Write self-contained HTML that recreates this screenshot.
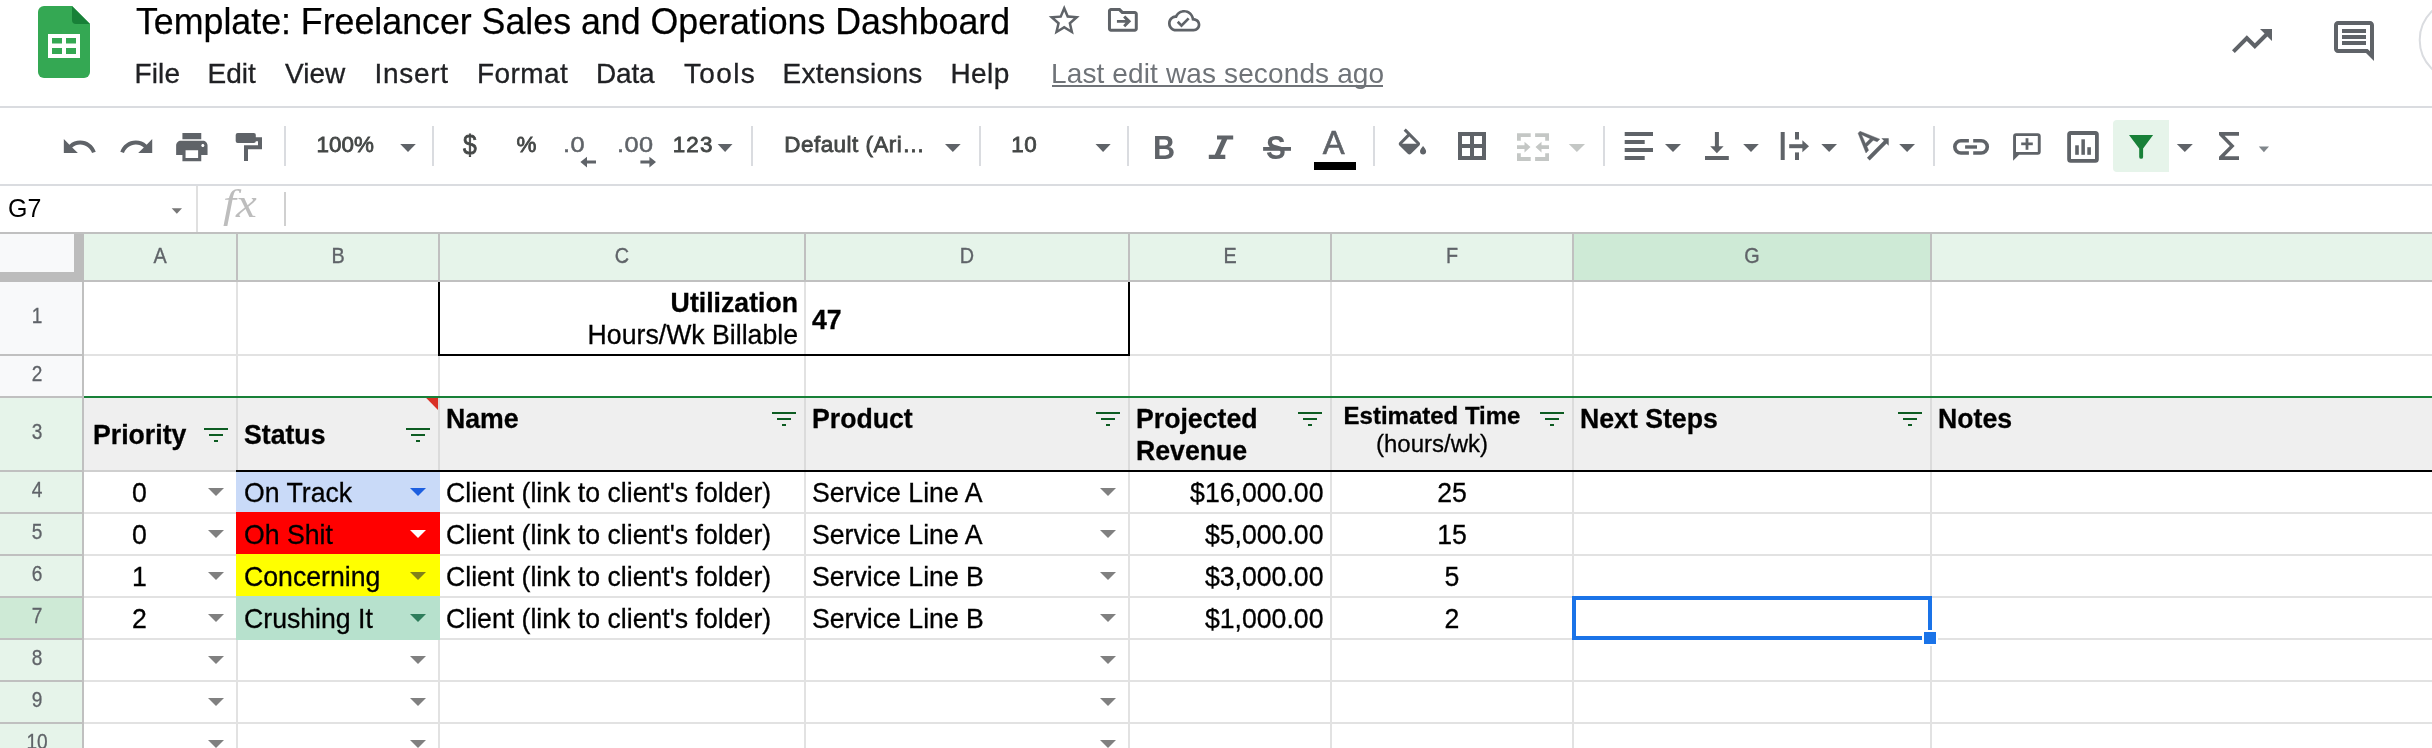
<!DOCTYPE html>
<html lang="en"><head><meta charset="utf-8">
<title>Template: Freelancer Sales and Operations Dashboard</title>
<style>
html,body{margin:0;padding:0;background:#fff;}
body{width:2432px;height:748px;overflow:hidden;position:relative;font-family:"Liberation Sans",sans-serif;color:#000;}
.a{position:absolute;white-space:pre;}
.r{position:absolute;}
.menu{font-size:28px;line-height:34px;color:#202124;-webkit-text-stroke:0.3px #202124;}
.tb{font-size:22.4px;line-height:30px;color:#444746;-webkit-text-stroke:0.8px #444746;}
.tbl{font-size:22.4px;line-height:30px;color:#5f6368;-webkit-text-stroke:0.5px #5f6368;transform:scaleX(1.13);transform-origin:left top;letter-spacing:0.4px;}
.ch{font-size:22.5px;line-height:24px;color:#5f6368;text-align:center;top:244.20px;transform:scaleX(0.88);-webkit-text-stroke:0.35px #5f6368;}
.rh{font-size:21.7px;line-height:24px;color:#5f6368;text-align:center;left:0;width:74px;transform:scaleX(0.88);-webkit-text-stroke:0.3px #5f6368;}
.c{font-size:26.67px;line-height:32px;color:#000;-webkit-text-stroke:0.3px #000;}
.b{font-weight:bold;}
.sep{position:absolute;top:126px;height:40px;width:2px;background:#dadce0;}
</style></head><body>
<div id="w" style="position:absolute;left:0;top:0;width:2432px;height:748px;will-change:transform">

<div class="r" style="left:0;top:106px;width:2432px;height:2px;background:#dadce0"></div>
<div class="a" style="left:135.8px;top:-2.33px;font-size:37.6px;line-height:46px;color:#000;transform:scaleX(0.951);transform-origin:left top;-webkit-text-stroke:0.25px #000">Template: Freelancer Sales and Operations Dashboard</div>
<div class="a menu" style="left:134.4px;top:57.40px;letter-spacing:0.2px">File</div>
<div class="a menu" style="left:207.5px;top:57.40px;letter-spacing:0px">Edit</div>
<div class="a menu" style="left:285px;top:57.40px;letter-spacing:0px">View</div>
<div class="a menu" style="left:374.5px;top:57.40px;letter-spacing:0.7px">Insert</div>
<div class="a menu" style="left:477px;top:57.40px;letter-spacing:0.42px">Format</div>
<div class="a menu" style="left:596px;top:57.40px;letter-spacing:-0.2px">Data</div>
<div class="a menu" style="left:684px;top:57.40px;letter-spacing:1.35px">Tools</div>
<div class="a menu" style="left:782.6px;top:57.40px;letter-spacing:0.3px">Extensions</div>
<div class="a menu" style="left:950.5px;top:57.40px;letter-spacing:0.4px">Help</div>
<div class="a" style="left:1051px;top:57.40px;font-size:28px;line-height:34px;color:#6f7378;letter-spacing:0.13px">Last edit was seconds ago</div>
<div class="r" style="left:1052px;top:84.5px;width:331px;height:2px;background:#6f7378"></div>
<div class="r" style="left:0;top:184px;width:2432px;height:2px;background:#dadce0"></div>
<div class="sep" style="left:284px"></div>
<div class="sep" style="left:432px"></div>
<div class="sep" style="left:751px"></div>
<div class="sep" style="left:979px"></div>
<div class="sep" style="left:1127px"></div>
<div class="sep" style="left:1373px"></div>
<div class="sep" style="left:1603px"></div>
<div class="sep" style="left:1933px"></div>
<div class="r" style="left:2113px;top:120px;width:56px;height:52px;border-radius:4px 0 0 4px;background:#e6f4ea"></div>
<div class="a tb" style="left:316.6px;top:130.44px">100%</div>
<div class="a tb" style="left:463.4px;top:129.50px;font-size:28px;transform:scaleX(0.88);transform-origin:left top">$</div>
<div class="a tb" style="left:516.6px;top:130.44px">%</div>
<div class="a tbl" style="left:563.3px;top:130.44px">.0</div>
<div class="a tbl" style="left:616.8px;top:130.44px">.00</div>
<div class="a tb" style="left:672.8px;top:130.44px;letter-spacing:1.1px">123</div>
<div class="a tb" style="left:784.3px;top:130.44px;letter-spacing:0.5px">Default (Ari…</div>
<div class="a tb" style="left:1011.3px;top:130.44px;letter-spacing:0.6px">10</div>
<div class="a" style="left:1153px;top:129.64px;font-size:32.5px;line-height:36px;font-weight:bold;color:#5f6368;transform:scaleX(0.94);transform-origin:left top">B</div>
<div class="a" style="left:1265.5px;top:130.17px;font-size:33px;line-height:36px;font-weight:bold;color:#5f6368;transform:scaleX(0.9);transform-origin:left top">S</div>
<div class="a" style="left:1322.8px;top:124.53px;font-size:32.8px;line-height:36px;color:#5f6368;-webkit-text-stroke:0.6px #5f6368">A</div>
<div class="r" style="left:1314px;top:162px;width:42px;height:8px;background:#000"></div>
<div class="a" style="left:7.6px;top:193.29px;font-size:26px;line-height:30px;color:#000;transform:scaleX(0.96);transform-origin:left top">G7</div>
<div class="r" style="left:196px;top:186px;width:2px;height:46px;background:#e0e0e0"></div>
<div class="r" style="left:284px;top:192px;width:2px;height:34px;background:#d0d0d0"></div>
<div class="a" style="left:222.5px;top:182.10px;font-family:'Liberation Serif',serif;font-style:italic;font-size:40px;line-height:44px;color:#bdbdbd;transform:scaleX(1.17);transform-origin:left top">fx</div><div class="r" style="left:0;top:232px;width:2432px;height:2px;background:#c0c0c0"></div>
<div class="r" style="left:84px;top:234px;width:2348px;height:46px;background:#e6f4ea"></div>
<div class="r" style="left:1574px;top:234px;width:356px;height:46px;background:#ceead6"></div>
<div class="r" style="left:0;top:280px;width:2432px;height:2px;background:#c0c0c0"></div>
<div class="r" style="left:0;top:234px;width:74px;height:38px;background:#f8f9fa"></div>
<div class="r" style="left:74px;top:234px;width:10px;height:48px;background:#bcbcbc"></div>
<div class="r" style="left:0;top:272px;width:84px;height:10px;background:#bcbcbc"></div>
<div class="r" style="left:0;top:282px;width:82px;height:72px;background:#f8f9fa"></div>
<div class="r" style="left:0;top:354px;width:82px;height:2px;background:#c0c0c0"></div>
<div class="a rh" style="top:304.38px">1</div>
<div class="r" style="left:0;top:356px;width:82px;height:40px;background:#f8f9fa"></div>
<div class="r" style="left:0;top:396px;width:82px;height:2px;background:#c0c0c0"></div>
<div class="a rh" style="top:362.38px">2</div>
<div class="r" style="left:0;top:398px;width:82px;height:72px;background:#e6f4ea"></div>
<div class="r" style="left:0;top:470px;width:82px;height:2px;background:#c0c0c0"></div>
<div class="a rh" style="top:420.38px">3</div>
<div class="r" style="left:0;top:472px;width:82px;height:40px;background:#e6f4ea"></div>
<div class="r" style="left:0;top:512px;width:82px;height:2px;background:#c0c0c0"></div>
<div class="a rh" style="top:478.38px">4</div>
<div class="r" style="left:0;top:514px;width:82px;height:40px;background:#e6f4ea"></div>
<div class="r" style="left:0;top:554px;width:82px;height:2px;background:#c0c0c0"></div>
<div class="a rh" style="top:520.38px">5</div>
<div class="r" style="left:0;top:556px;width:82px;height:40px;background:#e6f4ea"></div>
<div class="r" style="left:0;top:596px;width:82px;height:2px;background:#c0c0c0"></div>
<div class="a rh" style="top:562.38px">6</div>
<div class="r" style="left:0;top:598px;width:82px;height:40px;background:#ceead6"></div>
<div class="r" style="left:0;top:638px;width:82px;height:2px;background:#c0c0c0"></div>
<div class="a rh" style="top:604.38px">7</div>
<div class="r" style="left:0;top:640px;width:82px;height:40px;background:#e6f4ea"></div>
<div class="r" style="left:0;top:680px;width:82px;height:2px;background:#c0c0c0"></div>
<div class="a rh" style="top:646.38px">8</div>
<div class="r" style="left:0;top:682px;width:82px;height:40px;background:#e6f4ea"></div>
<div class="r" style="left:0;top:722px;width:82px;height:2px;background:#c0c0c0"></div>
<div class="a rh" style="top:688.38px">9</div>
<div class="r" style="left:0;top:724px;width:82px;height:40px;background:#e6f4ea"></div>
<div class="r" style="left:0;top:764px;width:82px;height:2px;background:#c0c0c0"></div>
<div class="a rh" style="top:730.38px">10</div>
<div class="r" style="left:82px;top:282px;width:2px;height:466px;background:#c0c0c0"></div>
<div class="r" style="left:84px;top:398px;width:2348px;height:72px;background:#efefef"></div>
<div class="r" style="left:84px;top:354px;width:2348px;height:2px;background:#e2e2e2"></div>
<div class="r" style="left:84px;top:512px;width:2348px;height:2px;background:#e2e2e2"></div>
<div class="r" style="left:84px;top:554px;width:2348px;height:2px;background:#e2e2e2"></div>
<div class="r" style="left:84px;top:596px;width:2348px;height:2px;background:#e2e2e2"></div>
<div class="r" style="left:84px;top:638px;width:2348px;height:2px;background:#e2e2e2"></div>
<div class="r" style="left:84px;top:680px;width:2348px;height:2px;background:#e2e2e2"></div>
<div class="r" style="left:84px;top:722px;width:2348px;height:2px;background:#e2e2e2"></div>
<div class="r" style="left:84px;top:764px;width:2348px;height:2px;background:#e2e2e2"></div>
<div class="r" style="left:236px;top:282px;width:2px;height:466px;background:#e2e2e2"></div>
<div class="r" style="left:236px;top:398px;width:2px;height:72px;background:#dbdbdb"></div>
<div class="r" style="left:236px;top:234px;width:2px;height:46px;background:#c0c0c0"></div>
<div class="r" style="left:438px;top:282px;width:2px;height:466px;background:#e2e2e2"></div>
<div class="r" style="left:438px;top:398px;width:2px;height:72px;background:#dbdbdb"></div>
<div class="r" style="left:438px;top:234px;width:2px;height:46px;background:#c0c0c0"></div>
<div class="r" style="left:804px;top:282px;width:2px;height:466px;background:#e2e2e2"></div>
<div class="r" style="left:804px;top:398px;width:2px;height:72px;background:#dbdbdb"></div>
<div class="r" style="left:804px;top:234px;width:2px;height:46px;background:#c0c0c0"></div>
<div class="r" style="left:1128px;top:282px;width:2px;height:466px;background:#e2e2e2"></div>
<div class="r" style="left:1128px;top:398px;width:2px;height:72px;background:#dbdbdb"></div>
<div class="r" style="left:1128px;top:234px;width:2px;height:46px;background:#c0c0c0"></div>
<div class="r" style="left:1330px;top:282px;width:2px;height:466px;background:#e2e2e2"></div>
<div class="r" style="left:1330px;top:398px;width:2px;height:72px;background:#dbdbdb"></div>
<div class="r" style="left:1330px;top:234px;width:2px;height:46px;background:#c0c0c0"></div>
<div class="r" style="left:1572px;top:282px;width:2px;height:466px;background:#e2e2e2"></div>
<div class="r" style="left:1572px;top:398px;width:2px;height:72px;background:#dbdbdb"></div>
<div class="r" style="left:1572px;top:234px;width:2px;height:46px;background:#c0c0c0"></div>
<div class="r" style="left:1930px;top:282px;width:2px;height:466px;background:#e2e2e2"></div>
<div class="r" style="left:1930px;top:398px;width:2px;height:72px;background:#dbdbdb"></div>
<div class="r" style="left:1930px;top:234px;width:2px;height:46px;background:#c0c0c0"></div>
<div class="a ch" style="left:84px;width:152px">A</div>
<div class="a ch" style="left:238px;width:200px">B</div>
<div class="a ch" style="left:440px;width:364px">C</div>
<div class="a ch" style="left:806px;width:322px">D</div>
<div class="a ch" style="left:1130px;width:200px">E</div>
<div class="a ch" style="left:1332px;width:240px">F</div>
<div class="a ch" style="left:1574px;width:356px">G</div>
<div class="r" style="left:84px;top:396px;width:2348px;height:2px;background:#188038"></div>
<div class="r" style="left:84px;top:470px;width:152px;height:2px;background:#cfcfcf"></div>
<div class="r" style="left:236px;top:470px;width:2196px;height:2px;background:#000"></div>
<div class="r" style="left:438px;top:282px;width:2px;height:74px;background:#000"></div>
<div class="r" style="left:1128px;top:282px;width:2px;height:74px;background:#000"></div>
<div class="r" style="left:438px;top:354px;width:692px;height:2px;background:#000"></div>
<div class="r" style="left:236px;top:472px;width:204px;height:40px;background:#c9daf8"></div>
<div class="r" style="left:236px;top:512px;width:204px;height:42px;background:#ff0000"></div>
<div class="r" style="left:236px;top:554px;width:204px;height:42px;background:#ffff00"></div>
<div class="r" style="left:236px;top:596px;width:204px;height:44px;background:#b7e1cd"></div>
<div class="a c b" style="left:440px;top:287.03px;width:358px;text-align:right;font-size:27.34px;line-height:32px;transform:scaleX(0.9756);transform-origin:right top;">Utilization</div>
<div class="a c" style="left:440px;top:318.73px;width:358px;text-align:right;font-size:27.34px;line-height:32px;transform:scaleX(0.9756);transform-origin:right top;">Hours/Wk Billable</div>
<div class="a c b" style="left:812.2px;top:303.53px;font-size:27.34px;line-height:32px;transform:scaleX(0.9756);transform-origin:left top;">47</div>
<div class="a c b" style="left:92.6px;top:418.63px;font-size:27.34px;line-height:32px;transform:scaleX(0.9756);transform-origin:left top;">Priority</div>
<div class="a c b" style="left:243.6px;top:418.63px;font-size:27.34px;line-height:32px;transform:scaleX(0.9756);transform-origin:left top;">Status</div>
<div class="a c b" style="left:446.4px;top:402.63px;font-size:27.34px;line-height:32px;transform:scaleX(0.9756);transform-origin:left top;">Name</div>
<div class="a c b" style="left:811.5px;top:402.63px;font-size:27.34px;line-height:32px;transform:scaleX(0.9756);transform-origin:left top;">Product</div>
<div class="a c b" style="left:1135.6px;top:402.63px;font-size:27.34px;line-height:32px;transform:scaleX(0.9756);transform-origin:left top;">Projected</div>
<div class="a c b" style="left:1135.6px;top:434.63px;font-size:27.34px;line-height:32px;transform:scaleX(0.9756);transform-origin:left top;">Revenue</div>
<div class="a c b" style="left:1332px;top:401.98px;width:200px;text-align:center;font-size:24.6px;line-height:28px;transform:scaleX(0.9756);transform-origin:center top;">Estimated Time</div>
<div class="a c" style="left:1332px;top:429.88px;width:200px;text-align:center;font-size:24.6px;line-height:28px;transform:scaleX(0.9756);transform-origin:center top;">(hours/wk)</div>
<div class="a c b" style="left:1579.6px;top:402.63px;font-size:27.34px;line-height:32px;transform:scaleX(0.9756);transform-origin:left top;">Next Steps</div>
<div class="a c b" style="left:1937.6px;top:402.63px;font-size:27.34px;line-height:32px;transform:scaleX(0.9756);transform-origin:left top;">Notes</div>
<div class="a c" style="left:84px;top:476.53px;width:111px;text-align:center;font-size:27.34px;line-height:32px;transform:scaleX(0.9756);transform-origin:center top;">0</div>
<div class="a c" style="left:243.6px;top:476.53px;font-size:27.34px;line-height:32px;transform:scaleX(0.9756);transform-origin:left top;">On Track</div>
<div class="a c" style="left:445.6px;top:476.53px;font-size:27.34px;line-height:32px;transform:scaleX(0.9756);transform-origin:left top;">Client (link to client's folder)</div>
<div class="a c" style="left:811.5px;top:476.53px;font-size:27.34px;line-height:32px;transform:scaleX(0.9756);transform-origin:left top;">Service Line A</div>
<div class="a c" style="left:1130px;top:476.53px;width:193.5px;text-align:right;font-size:27.34px;line-height:32px;transform:scaleX(0.9756);transform-origin:right top;">$16,000.00</div>
<div class="a c" style="left:1332px;top:476.53px;width:240px;text-align:center;font-size:27.34px;line-height:32px;transform:scaleX(0.9756);transform-origin:center top;">25</div>
<div class="a c" style="left:84px;top:518.53px;width:111px;text-align:center;font-size:27.34px;line-height:32px;transform:scaleX(0.9756);transform-origin:center top;">0</div>
<div class="a c" style="left:243.6px;top:518.53px;font-size:27.34px;line-height:32px;transform:scaleX(0.9756);transform-origin:left top;">Oh Shit</div>
<div class="a c" style="left:445.6px;top:518.53px;font-size:27.34px;line-height:32px;transform:scaleX(0.9756);transform-origin:left top;">Client (link to client's folder)</div>
<div class="a c" style="left:811.5px;top:518.53px;font-size:27.34px;line-height:32px;transform:scaleX(0.9756);transform-origin:left top;">Service Line A</div>
<div class="a c" style="left:1130px;top:518.53px;width:193.5px;text-align:right;font-size:27.34px;line-height:32px;transform:scaleX(0.9756);transform-origin:right top;">$5,000.00</div>
<div class="a c" style="left:1332px;top:518.53px;width:240px;text-align:center;font-size:27.34px;line-height:32px;transform:scaleX(0.9756);transform-origin:center top;">15</div>
<div class="a c" style="left:84px;top:560.53px;width:111px;text-align:center;font-size:27.34px;line-height:32px;transform:scaleX(0.9756);transform-origin:center top;">1</div>
<div class="a c" style="left:243.6px;top:560.53px;font-size:27.34px;line-height:32px;transform:scaleX(0.9756);transform-origin:left top;">Concerning</div>
<div class="a c" style="left:445.6px;top:560.53px;font-size:27.34px;line-height:32px;transform:scaleX(0.9756);transform-origin:left top;">Client (link to client's folder)</div>
<div class="a c" style="left:811.5px;top:560.53px;font-size:27.34px;line-height:32px;transform:scaleX(0.9756);transform-origin:left top;">Service Line B</div>
<div class="a c" style="left:1130px;top:560.53px;width:193.5px;text-align:right;font-size:27.34px;line-height:32px;transform:scaleX(0.9756);transform-origin:right top;">$3,000.00</div>
<div class="a c" style="left:1332px;top:560.53px;width:240px;text-align:center;font-size:27.34px;line-height:32px;transform:scaleX(0.9756);transform-origin:center top;">5</div>
<div class="a c" style="left:84px;top:602.53px;width:111px;text-align:center;font-size:27.34px;line-height:32px;transform:scaleX(0.9756);transform-origin:center top;">2</div>
<div class="a c" style="left:243.6px;top:602.53px;font-size:27.34px;line-height:32px;transform:scaleX(0.9756);transform-origin:left top;">Crushing It</div>
<div class="a c" style="left:445.6px;top:602.53px;font-size:27.34px;line-height:32px;transform:scaleX(0.9756);transform-origin:left top;">Client (link to client's folder)</div>
<div class="a c" style="left:811.5px;top:602.53px;font-size:27.34px;line-height:32px;transform:scaleX(0.9756);transform-origin:left top;">Service Line B</div>
<div class="a c" style="left:1130px;top:602.53px;width:193.5px;text-align:right;font-size:27.34px;line-height:32px;transform:scaleX(0.9756);transform-origin:right top;">$1,000.00</div>
<div class="a c" style="left:1332px;top:602.53px;width:240px;text-align:center;font-size:27.34px;line-height:32px;transform:scaleX(0.9756);transform-origin:center top;">2</div>
<div class="r" style="left:1572px;top:596px;width:352px;height:36px;border:4px solid #1a73e8"></div>
<div class="r" style="left:1922px;top:630px;width:16px;height:16px;background:#fff"></div>
<div class="r" style="left:1924px;top:632px;width:12px;height:12px;background:#1a73e8"></div><svg class="r" style="left:0;top:0" width="2432" height="748" viewBox="0 0 2432 748">
<path d="M44,6 H72 L90,24 V72 a6,6 0 0 1 -6,6 H44 a6,6 0 0 1 -6,-6 V12 a6,6 0 0 1 6,-6 Z" fill="#34a853"/>
<path d="M72,6 L90,24 H76 a4,4 0 0 1 -4,-4 Z" fill="#188038"/>
<path fill-rule="evenodd" d="M48,34 H80 V58 H48 Z M52,38 V43.5 H62 V38 Z M66,38 V43.5 H76 V38 Z M52,48 V54 H62 V48 Z M66,48 V54 H76 V48 Z" fill="#fff"/>
<path transform="translate(1045.6,2.0) scale(1.55,1.55)" d="M22 9.24l-7.19-.62L12 2 9.19 8.63 2 9.24l5.46 4.73L5.82 21 12 17.27 18.18 21l-1.63-7.03L22 9.24zM12 15.4l-3.76 2.27 1-4.28-3.32-2.88 4.38-.38L12 6.1l1.71 4.04 4.38.38-3.32 2.88 1 4.28L12 15.4z" fill="#5f6368" />
<path transform="translate(1105,2) scale(1.49,1.49)" d="M20 6h-8l-2-2H4c-1.1 0-2 .9-2 2v12c0 1.1.9 2 2 2h16c1.1 0 2-.9 2-2V8c0-1.1-.9-2-2-2zm0 12H4V6h5.17l2 2H20v10zm-7.84-2.42L13.58 17l4-4-4-4-1.42 1.41L13.75 12H8v2h5.75z" fill="#5f6368" />
<path transform="translate(1105,2) scale(1.49,1.49)" d="M4 4h6l2 2H4z" fill="#5f6368" />
<path transform="translate(1168,4.5) scale(1.35,1.35)" d="M19.35 10.04C18.67 6.59 15.64 4 12 4 9.11 4 6.6 5.64 5.35 8.04 2.34 8.36 0 10.91 0 14c0 3.31 2.69 6 6 6h13c2.76 0 5-2.24 5-5 0-2.64-2.05-4.78-4.65-4.96zM19 18H6c-2.21 0-4-1.79-4-4 0-2.05 1.53-3.76 3.56-3.97l1.07-.11.5-.95C8.08 7.14 9.94 6 12 6c2.62 0 4.88 1.86 5.39 4.43l.3 1.5 1.53.11c1.56.1 2.78 1.41 2.78 2.96 0 1.65-1.35 3-3 3zm-9-3.82l-2.09-2.09L6.5 13.5 10 17l6.01-6.01-1.41-1.41z" fill="#5f6368" />
<path transform="translate(2228,17) scale(2,2)" d="M16 6l2.29 2.29-4.88 4.88-4-4L2 16.59 3.41 18l6-6 4 4 6.3-6.29L22 12V6z" fill="#5f6368" />
<path transform="translate(2330,17) scale(2,2)" d="M21.99 4c0-1.1-.89-2-1.99-2H4c-1.1 0-2 .9-2 2v12c0 1.1.9 2 2 2h14l4 4-.01-18zM20 4v13.17L18.83 16H4V4h16zM6 12h12v2H6zm0-3h12v2H6zm0-3h12v2H6z" fill="#5f6368" />
<circle cx="2459.7" cy="40" r="40" fill="none" stroke="#dadce0" stroke-width="2"/>
<path transform="translate(60.7,128.1) scale(1.56,1.56)" d="M12.5 8c-2.65 0-5.05.99-6.9 2.6L2 7v9h9l-3.62-3.62c1.39-1.16 3.16-1.88 5.12-1.88 3.54 0 6.55 2.31 7.6 5.5l2.37-.78C21.08 11.03 17.15 8 12.5 8z" fill="#5f6368" />
<path transform="translate(117.9,128.1) scale(1.56,1.56)" d="M18.4 10.6C16.55 8.99 14.15 8 11.5 8c-4.65 0-8.58 3.03-9.96 7.22L3.9 16c1.05-3.19 4.05-5.5 7.6-5.5 1.95 0 3.73.72 5.12 1.88L13 16h9V7l-3.6 3.6z" fill="#5f6368" />
<path transform="translate(173,128.2) scale(1.57,1.57)" d="M19 8H5c-1.66 0-3 1.34-3 3v6h4v4h12v-4h4v-6c0-1.66-1.34-3-3-3zm-3 11H8v-5h8v5zm3-7c-.55 0-1-.45-1-1s.45-1 1-1 1 .45 1 1-.45 1-1 1zm-1-9H6v4h12V3z" fill="#5f6368" />
<rect x="235.7" y="132.9" width="20.1" height="10.2" rx="2" fill="#5f6368"/>
<polyline points="255,139.3 260,139.3 260,147.3 246,147.3 246,160.9" fill="none" stroke="#5f6368" stroke-width="4"/>
<polygon points="400.2,143.9 415.8,143.9 408.0,151.9" fill="#5f6368"/>
<polygon points="717.7,143.9 732.5,143.9 725.1,151.9" fill="#5f6368"/>
<polygon points="945,143.9 960.7,143.9 952.85,151.9" fill="#5f6368"/>
<polygon points="1095.5,143.9 1110.7,143.9 1103.1,151.9" fill="#5f6368"/>
<polygon points="1665,143.9 1681,143.9 1673.0,151.9" fill="#5f6368"/>
<polygon points="1743.2,143.9 1758.8,143.9 1751.0,151.9" fill="#5f6368"/>
<polygon points="1821.3,143.9 1837,143.9 1829.15,151.9" fill="#5f6368"/>
<polygon points="1899.2,143.9 1915,143.9 1907.1,151.9" fill="#5f6368"/>
<polygon points="2176.8,143.9 2192.8,143.9 2184.8,151.9" fill="#5f6368"/>
<polygon points="1568.8,143.9 1585,143.9 1576.9,151.9" fill="#c4c7c5"/>
<polygon points="2258.8,146.6 2269,146.6 2263.9,152.2" fill="#80868b"/>
<path d="M596,160.5 H587 V156.7 L580.4,162 L587,167.4 V163.5 H596 Z" fill="#5f6368"/>
<path d="M640.4,160.5 H649.4 V156.7 L656,162 L649.4,167.4 V163.5 H640.4 Z" fill="#5f6368"/>
<path d="M1217,135.4 H1233.2 V139.5 H1227.2 L1220.3,154.8 H1225.3 V158.9 H1208.8 V154.8 H1214.8 L1221.7,139.5 H1217 Z" fill="#5f6368"/>
<rect x="1263.1" y="147" width="27.9" height="3.8" fill="#5f6368"/>
<path transform="translate(1394.2,128.6) scale(1.52,1.52)" d="M16.56 8.94L7.62 0 6.21 1.41l2.38 2.38-5.15 5.15c-.59.59-.59 1.54 0 2.12l5.5 5.5c.29.29.68.44 1.06.44s.77-.15 1.06-.44l5.5-5.5c.59-.58.59-1.53 0-2.12zM5.21 10L10 5.21 14.79 10H5.21zM19 11.5s-2 2.17-2 3.5c0 1.1.9 2 2 2s2-.9 2-2c0-1.33-2-3.5-2-3.5z" fill="#5f6368" />
<path fill-rule="evenodd" d="M1458,132 H1486 V160 H1458 Z M1462,136 V144 H1470 V136 Z M1474,136 V144 H1482 V136 Z M1462,148 V156 H1470 V148 Z M1474,148 V156 H1482 V148 Z" fill="#5f6368"/>
<g fill="#c4c7c5">
<path d="M1517,133.2 H1530.7 V137 H1520.8 V140.8 H1517 Z"/>
<path d="M1549,133.2 H1535.1 V137 H1545.2 V140.8 H1549 Z"/>
<path d="M1517,160.9 H1530.7 V157.1 H1520.8 V153.3 H1517 Z"/>
<path d="M1549,160.9 H1535.1 V157.1 H1545.2 V153.3 H1549 Z"/>
<path d="M1517,145.2 H1524.5 V141.8 L1530.5,147.1 L1524.5,152.4 V149 H1517 Z"/>
<path d="M1549,145.2 H1541.5 V141.8 L1535.5,147.1 L1541.5,152.4 V149 H1549 Z"/>
</g>
<rect x="1624.7" y="132" width="28.3" height="4" fill="#5f6368"/>
<rect x="1624.7" y="140" width="20" height="4" fill="#5f6368"/>
<rect x="1624.7" y="148" width="28.3" height="4" fill="#5f6368"/>
<rect x="1624.7" y="156" width="20" height="4" fill="#5f6368"/>
<rect x="1714.9" y="132" width="4" height="15" fill="#5f6368"/>
<polygon points="1710.2,146.2 1723.6,146.2 1716.9,153.2" fill="#5f6368"/>
<rect x="1705" y="156" width="23.8" height="4" fill="#5f6368"/>
<rect x="1780.7" y="132" width="4" height="28" fill="#5f6368"/>
<rect x="1795" y="132" width="4" height="7.5" fill="#5f6368"/>
<rect x="1795" y="152.4" width="4" height="7.6" fill="#5f6368"/>
<rect x="1789.2" y="144.2" width="14" height="4" fill="#5f6368"/>
<polygon points="1802.4,140.2 1809,146.2 1802.4,152.3" fill="#5f6368"/>
<path transform="translate(1852,123.8) scale(1.78,1.78)" d="M4.49 4.21L3.43 5.27 7.85 16.4l1.48-1.48-.92-2.19 3.54-3.54 2.19.92 1.48-1.48L4.49 4.21zm3.09 6.8L5.36 6.14l4.87 2.23-2.65 2.64z" fill="#5f6368" stroke="#5f6368" stroke-width="0.25"/>
<line x1="1868.3" y1="159.2" x2="1886.0" y2="141.4" stroke="#5f6368" stroke-width="3.9"/>
<polygon points="1881.4,138.2 1888.7,138.2 1888.7,145.8" fill="#5f6368"/>
<path d="M1968.9,140.7 H1960.95 A6.15,6.15 0 0 0 1960.95,153 H1968.9" fill="none" stroke="#5f6368" stroke-width="3.6"/>
<path d="M1973.2,140.7 H1981.15 A6.15,6.15 0 0 1 1981.15,153 H1973.2" fill="none" stroke="#5f6368" stroke-width="3.6"/>
<rect x="1965.1" y="145.3" width="11.9" height="3.4" fill="#5f6368"/>
<path fill-rule="evenodd" d="M2016.1,133.2 H2037.7 a3,3 0 0 1 3,3 V151.8 a3,3 0 0 1 -3,3 H2019.1 L2013.1,160.8 V136.2 a3,3 0 0 1 3,-3 Z M2016,136.1 V151.9 H2037.8 V136.1 Z" fill="#5f6368"/>
<rect x="2021.2" y="142.5" width="11.6" height="2.7" fill="#5f6368"/>
<rect x="2025.6" y="138.2" width="2.8" height="11.6" fill="#5f6368"/>
<path fill-rule="evenodd" d="M2070.7,131.1 H2095.3 a3.5,3.5 0 0 1 3.5,3.5 V159.3 a3.5,3.5 0 0 1 -3.5,3.5 H2070.7 a3.5,3.5 0 0 1 -3.5,-3.5 V134.6 a3.5,3.5 0 0 1 3.5,-3.5 Z M2071,134.9 V159 H2095 V134.9 Z" fill="#5f6368"/>
<rect x="2075.2" y="145.3" width="3.6" height="9.5" fill="#5f6368"/>
<rect x="2081.4" y="139.3" width="3.5" height="15.5" fill="#5f6368"/>
<rect x="2087.3" y="147.2" width="3.6" height="7.6" fill="#5f6368"/>
<path d="M2129,134.9 H2153.1 L2143.1,148.4 V156.9 a1.95,1.95 0 0 1 -3.9,0 V148.4 Z" fill="#188038"/>
<polygon points="2219,132.1 2239,132.1 2239,135.8 2224.6,135.8 2234.6,145.9 2224.6,156.2 2239,156.2 2239,159.9 2219,159.9 2219,156.8 2229.8,145.9 2219,135.1" fill="#5f6368"/>
<polygon points="171.7,208.3 182,208.3 176.85,213.8" fill="#777"/>
<rect x="204" y="428" width="24" height="2" fill="#0d5c22"/>
<rect x="209" y="434" width="14" height="2" fill="#0d5c22"/>
<rect x="214" y="440" width="4" height="2" fill="#0d5c22"/>
<rect x="406" y="428" width="24" height="2" fill="#0d5c22"/>
<rect x="411" y="434" width="14" height="2" fill="#0d5c22"/>
<rect x="416" y="440" width="4" height="2" fill="#0d5c22"/>
<rect x="772" y="412" width="24" height="2" fill="#0d5c22"/>
<rect x="777" y="418" width="14" height="2" fill="#0d5c22"/>
<rect x="782" y="424" width="4" height="2" fill="#0d5c22"/>
<rect x="1096" y="412" width="24" height="2" fill="#0d5c22"/>
<rect x="1101" y="418" width="14" height="2" fill="#0d5c22"/>
<rect x="1106" y="424" width="4" height="2" fill="#0d5c22"/>
<rect x="1298" y="412" width="24" height="2" fill="#0d5c22"/>
<rect x="1303" y="418" width="14" height="2" fill="#0d5c22"/>
<rect x="1308" y="424" width="4" height="2" fill="#0d5c22"/>
<rect x="1540" y="412" width="24" height="2" fill="#0d5c22"/>
<rect x="1545" y="418" width="14" height="2" fill="#0d5c22"/>
<rect x="1550" y="424" width="4" height="2" fill="#0d5c22"/>
<rect x="1898" y="412" width="24" height="2" fill="#0d5c22"/>
<rect x="1903" y="418" width="14" height="2" fill="#0d5c22"/>
<rect x="1908" y="424" width="4" height="2" fill="#0d5c22"/>
<polygon points="426.2,398 438,398 438,410" fill="#d93025"/>
<polygon points="208,488 224,488 216.0,496" fill="#808080"/>
<polygon points="1100,488 1116,488 1108.0,496" fill="#808080"/>
<polygon points="410,488 426,488 418.0,496" fill="#1c5fe0"/>
<polygon points="208,530 224,530 216.0,538" fill="#808080"/>
<polygon points="1100,530 1116,530 1108.0,538" fill="#808080"/>
<polygon points="410,530 426,530 418.0,538" fill="#ffffff"/>
<polygon points="208,572 224,572 216.0,580" fill="#808080"/>
<polygon points="1100,572 1116,572 1108.0,580" fill="#808080"/>
<polygon points="410,572 426,572 418.0,580" fill="#80801a"/>
<polygon points="208,614 224,614 216.0,622" fill="#808080"/>
<polygon points="1100,614 1116,614 1108.0,622" fill="#808080"/>
<polygon points="410,614 426,614 418.0,622" fill="#2e7d5b"/>
<polygon points="208,656 224,656 216.0,664" fill="#808080"/>
<polygon points="1100,656 1116,656 1108.0,664" fill="#808080"/>
<polygon points="410,656 426,656 418.0,664" fill="#808080"/>
<polygon points="208,698 224,698 216.0,706" fill="#808080"/>
<polygon points="1100,698 1116,698 1108.0,706" fill="#808080"/>
<polygon points="410,698 426,698 418.0,706" fill="#808080"/>
<polygon points="208,740 224,740 216.0,748" fill="#808080"/>
<polygon points="1100,740 1116,740 1108.0,748" fill="#808080"/>
<polygon points="410,740 426,740 418.0,748" fill="#808080"/>
</svg></div></body></html>
